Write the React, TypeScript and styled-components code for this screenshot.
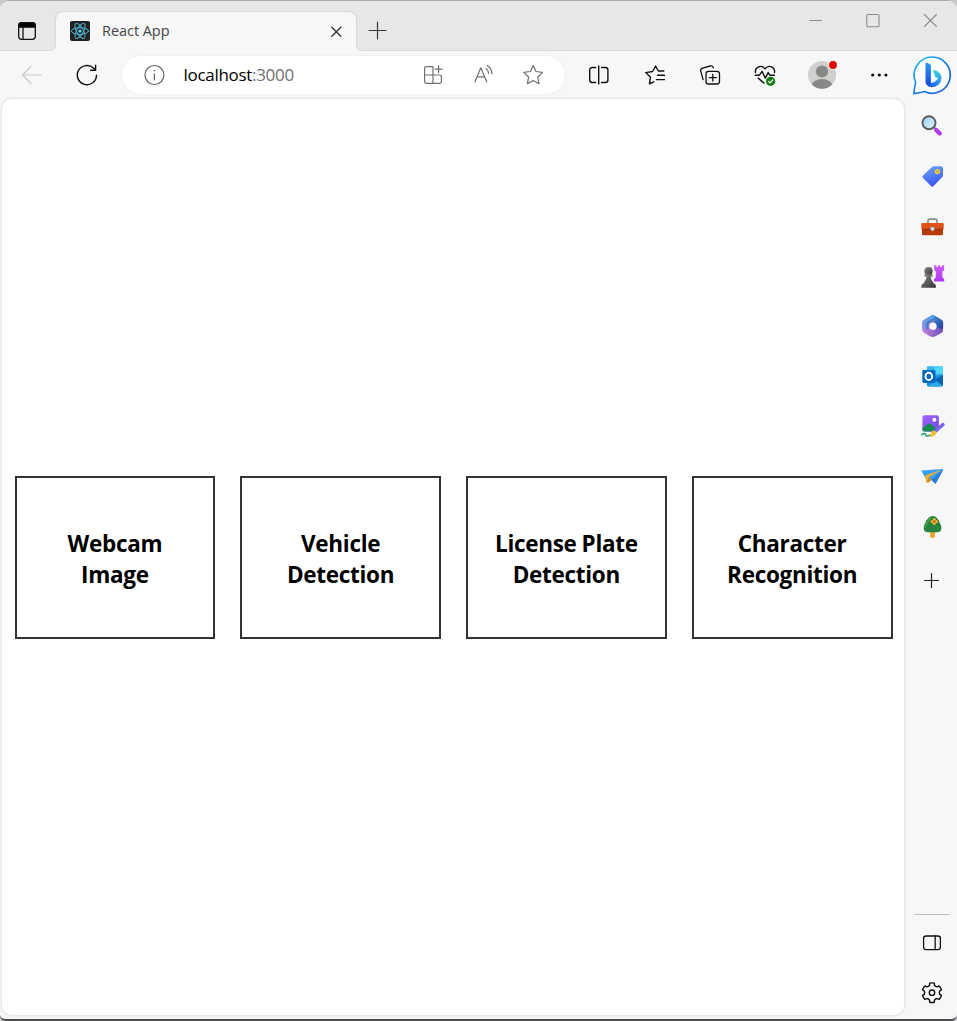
import React from 'react';
import styled, { createGlobalStyle } from 'styled-components';

const GlobalStyle = createGlobalStyle`
  * { box-sizing: border-box; }
  body { margin: 0; background: #c9c9cd; font-family: 'Open Sans', 'Noto Sans', sans-serif; }
`;

const Window = styled.div`
  width: 957px;
  height: 1021px;
  display: flex;
  flex-direction: column;
  overflow: hidden;
  background: #f7f7f7;
  border-top: 1px solid #a9a9a9;
  border-bottom: 2px solid #4b4b4b;
  border-radius: 9px 9px 6px 6px;
`;

const TitleBar = styled.header`
  height: 50px;
  flex: none;
  display: flex;
  align-items: flex-end;
  background: #e7e7e7;
  border-bottom: 1px solid #dadada;
`;

const TabActions = styled.div`
  width: 56px;
  height: 38px;
  display: flex;
  align-items: center;
  padding-left: 15px;
`;

const Tab = styled.div`
  position: relative;
  width: 300px;
  height: 39px;
  margin-bottom: -1px;
  padding: 0 12px 2px 14px;
  display: flex;
  align-items: center;
  background: #f7f7f7;
  border-radius: 7px 7px 0 0;
  box-shadow: 0 0 2px rgba(0, 0, 0, 0.22);
  clip-path: inset(-3px -6px 0 -6px);

  &::before,
  &::after {
    content: '';
    position: absolute;
    bottom: 0;
    width: 5px;
    height: 5px;
  }
  &::before {
    left: -5px;
    background: radial-gradient(circle at 0 0, #e7e7e7 3.6px, #d8d8d8 4.3px, #f7f7f7 5.1px);
  }
  &::after {
    right: -5px;
    background: radial-gradient(circle at 100% 0, #e7e7e7 3.6px, #d8d8d8 4.3px, #f7f7f7 5.1px);
  }
`;

const TabTitle = styled.span`
  flex: 1;
  margin-left: 12px;
  font-size: 14.5px;
  line-height: 20px;
  letter-spacing: -0.05px;
  color: #454545;
`;

const NewTab = styled.div`
  height: 39px;
  padding-left: 10px;
  display: flex;
  align-items: center;
`;

const WindowControls = styled.div`
  margin-left: auto;
  align-self: flex-start;
  height: 38px;
  padding-right: 15px;
  display: flex;
  align-items: center;
  gap: 33px;
`;

const Body = styled.div`
  flex: 1;
  min-height: 0;
  display: flex;
`;

const Main = styled.div`
  width: 905px;
  display: flex;
  flex-direction: column;
`;

const Toolbar = styled.div`
  height: 47px;
  flex: none;
  display: flex;
  align-items: center;
  padding-left: 12px;
`;

const ToolButton = styled.div<{ $gap?: number }>`
  width: 40px;
  height: 40px;
  margin-left: ${(p) => p.$gap ?? 15}px;
  display: flex;
  align-items: center;
  justify-content: center;
`;

const AddressBar = styled.div`
  width: 443px;
  height: 38px;
  margin-left: 15px;
  padding: 0 20px 0 20px;
  display: flex;
  align-items: center;
  background: #fff;
  border-radius: 19px;
  box-shadow: 0 0 3px rgba(0, 0, 0, 0.06);
`;

const Url = styled.span`
  flex: 1;
  margin-left: 17.5px;
  font-size: 17px;
  line-height: 24px;
  letter-spacing: -0.3px;
  color: #000;
`;

const Port = styled.span`
  color: #6f6f6f;
`;

const AddressActions = styled.div`
  display: flex;
  gap: 26px;
`;

const Page = styled.main`
  flex: 1;
  margin: 0 0 3px 1px;
  padding: 0 11.5px 0 12.5px;
  display: flex;
  align-items: center;
  background: #fff;
  border: 1px solid #e8e8e8;
  border-radius: 11px;
  box-shadow: 0 0 2px rgba(0, 0, 0, 0.1);
`;

const Stages = styled.div`
  flex: 1;
  display: grid;
  grid-template-columns: repeat(4, 1fr);
  gap: 25px;
`;

const Stage = styled.section`
  height: 163px;
  padding: 0 20px;
  display: flex;
  align-items: center;
  justify-content: center;
  border: 2px solid #333;
`;

const StageTitle = styled.h2`
  margin: 4px 0 0;
  font-size: 22.5px;
  line-height: 31px;
  font-weight: 700;
  letter-spacing: -0.3px;
  word-spacing: -0.5px;
  text-align: center;
  color: #000;
`;

const Sidebar = styled.aside`
  width: 52px;
  display: flex;
  flex-direction: column;
  align-items: center;
  padding: 4px 0 14px 2px;
`;

const Apps = styled.div`
  display: flex;
  flex-direction: column;
  gap: 26px;
  margin-top: 19px;
`;

const AddApp = styled.div`
  display: flex;
  margin-top: 31px;
`;

const SidebarFooter = styled.div`
  width: 35px;
  margin-top: auto;
  padding-top: 16px;
  display: flex;
  flex-direction: column;
  align-items: center;
  gap: 26px;
  border-top: 1px solid #bdbdbd;
`;

const Drawing = styled.svg`
  display: block;
  flex: none;
  overflow: visible;
  fill: none;
  stroke-linecap: round;
  stroke-linejoin: round;
`;

type IconProps = { size?: number; color?: string; width?: number; children: React.ReactNode };

const Icon = ({ size = 24, color = 'none', width = 1.4, children }: IconProps) => (
  <Drawing width={size} height={size} viewBox={`0 0 ${size} ${size}`} stroke={color} strokeWidth={width}>
    {children}
  </Drawing>
);

const TabActionsIcon = () => (
  <Icon color="#111" width={1.3}>
    <rect x="3.7" y="3.7" width="16.6" height="16.6" rx="3" />
    <path d="M3.7 8.2V6.7a3 3 0 0 1 3-3h10.6a3 3 0 0 1 3 3v1.5z" fill="#000" />
    <path d="M8 8v12" />
  </Icon>
);

const ReactIcon = () => (
  <Icon size={20} color="#4fc3e0" width={0.9}>
    <rect width="20" height="20" rx="2" fill="#222" stroke="none" />
    <circle cx="10" cy="10" r="1.6" fill="#61dafb" stroke="none" />
    <ellipse cx="10" cy="10" rx="8.6" ry="3.3" />
    <ellipse cx="10" cy="10" rx="8.6" ry="3.3" transform="rotate(60 10 10)" />
    <ellipse cx="10" cy="10" rx="8.6" ry="3.3" transform="rotate(120 10 10)" />
  </Icon>
);

const CloseTabIcon = () => (
  <Icon size={14} color="#333" width={1.3}>
    <path d="M1.8 3.3l9 9m0-9l-9 9" />
  </Icon>
);

const BackIcon = () => (
  <Icon color="#c9c9c9" width={1.2}>
    <path d="M21.5 12H2.5M11 3.5L2.5 12l8.5 8.5" />
  </Icon>
);

const ReloadIcon = () => (
  <Icon color="#111" width={1.4}>
    <path d="M21.5 12.2A9.6 9.6 0 1 1 18.4 5l2.2 2.1M20.6 2.2v5h-5" />
  </Icon>
);

const InfoIcon = () => (
  <Icon color="#666" width={1.2}>
    <circle cx="12.4" cy="12" r="9.5" />
    <path d="M12.4 10.8v6" />
    <circle cx="12.4" cy="7.8" r="0.8" fill="#666" stroke="none" />
  </Icon>
);

const AddAppIcon = () => (
  <Icon color="#6f6f6f" width={1.2}>
    <path d="M12 3.6H5.4a1.8 1.8 0 0 0-1.8 1.8v13.2a1.8 1.8 0 0 0 1.8 1.8h13.2a1.8 1.8 0 0 0 1.8-1.8v-4.8a1.8 1.8 0 0 0-1.8-1.8H3.6M12 3.6v16.8M17.6 2.6v7M14.1 6.1h7" />
  </Icon>
);

const ReadAloudIcon = () => (
  <Icon color="#6f6f6f" width={1.2}>
    <path d="M3.9 19L9.8 4.8 15.8 19M6.1 13.8h7.6M15 5.6c1.6 1.1 2.5 2.7 2.6 4.7M16.1 2.4c3 1.7 4.7 4.6 4.9 8.3" />
  </Icon>
);

const StarIcon = () => (
  <Icon color="#6f6f6f" width={1.2}>
    <path d="M12.2 2.5l2.8 6 6.6.9-4.8 4.6 1.2 6.7-5.8-3.2-5.8 3.2L7.6 14 2.8 9.4l6.6-.9z" />
  </Icon>
);

const SplitIcon = () => (
  <Icon color="#111" width={1.4}>
    <path d="M8.7 4.5H5.2a2.5 2.5 0 0 0-2.5 2.5v10a2.5 2.5 0 0 0 2.5 2.5h3.5M14.7 4.5h3.7a2.5 2.5 0 0 1 2.5 2.5v10a2.5 2.5 0 0 1-2.5 2.5h-3.7M11.7 3v18" />
  </Icon>
);

const FavoritesIcon = () => (
  <Icon color="#111" width={1.4}>
    <path d="M20.8 8h-5.5l-2.7-5-3 5.5-6.9 1.1 4.8 4.7-1.1 6.6 4.4-2.1M14.5 12.3h7M13.3 16.6h8.2" />
  </Icon>
);

const CollectionsIcon = () => (
  <Icon color="#111" width={1.3}>
    <rect x="8" y="8.3" width="13.5" height="12.7" rx="2.5" />
    <path d="M14.8 11.3v6.8M11.4 14.7h6.8M5.1 16.7L2.8 8.3a2.6 2.6 0 0 1 1.8-3.2l7.6-2.1a2.6 2.6 0 0 1 3.1 1.8" />
  </Icon>
);

const HealthIcon = () => (
  <Icon color="#111" width={1.4}>
    <path d="M2.5 9.5C1.6 4.4 8.2 0.9 12 5.9c3.8-5 10.4-1.5 9.5 3.6M2.2 12.2h4.3l2.6-3.8 3.2 6.7 2.9-5.5 1.6 2.6h4.7M5.2 15.1l5.8 5" />
    <circle cx="17.6" cy="18.3" r="4.6" fill="#107c10" stroke="none" />
    <path d="M15.5 18.4l1.5 1.4 2.7-2.8" stroke="#fff" strokeWidth="1.1" />
  </Icon>
);

const AvatarIcon = () => (
  <Icon size={28}>
    <defs>
      <clipPath id="avatar"><circle cx="14" cy="14" r="13.7" /></clipPath>
    </defs>
    <circle cx="14" cy="14" r="14" fill="#d2d0ce" />
    <circle cx="14" cy="10.5" r="6.1" fill="#8a8886" />
    <ellipse cx="14" cy="25.8" rx="10.8" ry="7.8" fill="#8a8886" clipPath="url(#avatar)" />
    <circle cx="25" cy="4" r="4.8" fill="#f7f7f7" />
    <circle cx="25" cy="4" r="3.9" fill="#e50000" />
  </Icon>
);

const MoreIcon = () => (
  <Icon>
    <circle cx="5.7" cy="12" r="1.6" fill="#111" />
    <circle cx="12.3" cy="12" r="1.6" fill="#111" />
    <circle cx="18.9" cy="12" r="1.6" fill="#111" />
  </Icon>
);

const BingIcon = () => (
  <Icon size={40}>
    <defs>
      <linearGradient id="bubble" x1="0" y1="0" x2="1" y2="1">
        <stop offset="0" stopColor="#28c4f0" />
        <stop offset=".5" stopColor="#1f7fe8" />
        <stop offset="1" stopColor="#2057c9" />
      </linearGradient>
      <linearGradient id="stem" x1="0" y1="0" x2="0" y2="1">
        <stop offset="0" stopColor="#2b9cf2" />
        <stop offset="1" stopColor="#1748d8" />
      </linearGradient>
      <linearGradient id="bowl" x1="0" y1="0" x2=".6" y2="1">
        <stop offset="0" stopColor="#3be0d0" />
        <stop offset="1" stopColor="#2a9cf4" />
      </linearGradient>
      <linearGradient id="base" x1="0" y1="1" x2="1" y2="0">
        <stop offset="0" stopColor="#1a4be0" />
        <stop offset="1" stopColor="#35b4f5" />
      </linearGradient>
    </defs>
    <path
      d="M20.3 2A18.1 18.1 0 1 1 12.5 36.5C9 37.5 5.5 38 1.8 38.6 2.5 34.5 2.6 31.3 3.7 27.5A18.1 18.1 0 0 1 20.3 2z"
      fill="#fff" stroke="url(#bubble)" strokeWidth="1.7"
    />
    <path d="M21.2 15.8q-.4-1.1.9-.8c4.9 1.2 7.3 4.5 7.3 8.3l-2.6 3.2-.6-3.2-3-1.4z" fill="url(#bowl)" />
    <path d="M29.4 22.8c.3 5.2-4.6 9.4-9.6 9.4-3.6 0-6.1-2.4-6.1-5.6l4.8 1.2c3 .4 6-2 8-4.8z" fill="url(#base)" />
    <path d="M13.5 8.2q0-1 1-.7l3.2 1.4q1.2.6 1.2 1.8v16c0 2.6-1.2 3.6-2.6 3.6-1.7 0-2.8-1.7-2.8-4z" fill="url(#stem)" />
  </Icon>
);

const SearchIcon = () => (
  <Icon>
    <defs>
      <linearGradient id="lens" x1="0" y1="0" x2="1" y2="1">
        <stop offset="0" stopColor="#9ccff2" /><stop offset="1" stopColor="#e0f5ff" />
      </linearGradient>
    </defs>
    <path d="M13.3 12.8l3 3" stroke="#8b8b8b" strokeWidth="2.4" />
    <path d="M16.2 15.9l3.6 3.6" stroke="#b637ef" strokeWidth="4.2" />
    <circle cx="9" cy="8.7" r="6.5" fill="url(#lens)" stroke="#5e5e5e" strokeWidth="2" />
  </Icon>
);

const TagIcon = () => (
  <Icon>
    <defs>
      <linearGradient id="tag" x1=".3" y1="0" x2=".6" y2="1">
        <stop offset="0" stopColor="#68a2fa" /><stop offset="1" stopColor="#3a4ff0" />
      </linearGradient>
    </defs>
    <path d="M12.3 2.8q.6-.6 1.5-.6h7q2.2 0 2.2 2.2v7q0 1-.7 1.7l-8.7 9q-1.3 1.2-2.6 0l-8-8q-1.3-1.2 0-2.5z" fill="url(#tag)" />
    <circle cx="17.4" cy="7.6" r="2.6" fill="#f3ce36" />
    <circle cx="17.4" cy="7.6" r="1.1" fill="#b99d48" />
  </Icon>
);

const ToolsIcon = () => (
  <Icon>
    <path d="M8 9.5V6.9q0-1.8 1.8-1.8h5.4q1.8 0 1.8 1.8v2.6" stroke="#8d8d8d" strokeWidth="1.7" />
    <rect x="2" y="12" width="21" height="9.3" rx="1.5" fill="#b73b08" />
    <rect x="1.3" y="9" width="22.4" height="6.2" rx="1.3" fill="#df5317" />
    <path d="M2 15.2h21" stroke="#8c2c09" strokeWidth=".8" />
    <path d="M10.5 13h4v2.8q-2 2.4-4 0z" fill="#d9d9d9" stroke="#777" strokeWidth=".5" />
  </Icon>
);

const GamesIcon = () => (
  <Icon>
    <defs>
      <linearGradient id="rook" x1="0" y1="0" x2="0" y2="1">
        <stop offset="0" stopColor="#d05cf8" /><stop offset="1" stopColor="#ae35f4" />
      </linearGradient>
      <linearGradient id="pawn" x1="0" y1="0" x2="1" y2="1">
        <stop offset="0" stopColor="#888" /><stop offset="1" stopColor="#333" />
      </linearGradient>
    </defs>
    <path d="M14.2 1.3h2.3v1.8h1.6V1.3h2.2v1.8h1.6V1.3h2.2v5l-1.9 1.5.4 6 1.6 1.2v2.6H14V15l1.7-1.2.3-6-1.8-1.5z" fill="url(#rook)" />
    <circle cx="8.5" cy="7.2" r="4.1" fill="url(#pawn)" />
    <path d="M4.4 10.3h8.2v2.3h-1.8c.1 2.6.9 4.2 2.3 5.4v1.1q2.8.9 2.8 3v1.6H1.3v-1.6q0-2.1 2.8-3V18c1.4-1.2 2.2-2.8 2.3-5.4h-2z" fill="url(#pawn)" />
  </Icon>
);

const MicrosoftIcon = () => (
  <Icon>
    <defs>
      <linearGradient id="m365left" x1="0" y1="1" x2="1" y2="0">
        <stop offset="0" stopColor="#8f8ce6" /><stop offset="1" stopColor="#4aa8e2" />
      </linearGradient>
      <linearGradient id="m365right" x1="0" y1="0" x2="1" y2="1">
        <stop offset="0" stopColor="#3aa0e0" /><stop offset="1" stopColor="#2b3c9e" />
      </linearGradient>
      <linearGradient id="m365base" x1="0" y1="0" x2="1" y2="0">
        <stop offset="0" stopColor="#bd83dd" /><stop offset="1" stopColor="#6b50b6" />
      </linearGradient>
    </defs>
    <path d="M10 2.2q2.7-1.8 5.4 0l5.9 3.5q1.8 1.1 1.8 3v7.2q0 1.9-1.8 3L15.4 22.2q-2.7 1.6-5.5 0L4.1 18.7q-1.8-1-1.8-3V8.8q0-2 1.8-3.1z" fill="url(#m365base)" />
    <path d="M10 2.2q2.7-1.8 5.4 0l5.9 3.5q1.8 1.1 1.8 3v4.5q-1 2.2-3.6 1.3l-3-1.5-2-6.4-5-1.6z" fill="url(#m365right)" />
    <path d="M10 2.2L4.1 5.7q-1.8 1.1-1.8 3.1v5.4q1.6 1.6 4 .8l2-1.3V9.8L15 6.2l-1.6-5q-1.6-.2-3.4 1z" fill="url(#m365left)" />
    <path d="M8.2 9.8l4.9-3.4 2.5-1.4-2-.9-6.4 3.7q-1 .6-1 2v5.6l2-1.2z" fill="#3263bd" opacity=".6" />
    <circle cx="12.9" cy="12.2" r="3.7" fill="#f7f7f7" />
  </Icon>
);

const OutlookIcon = () => (
  <Icon>
    <rect x="6.8" y="2.2" width="15.9" height="16" rx="1.3" fill="#35b8f1" />
    <path d="M14.7 2.2h6.7q1.3 0 1.3 1.3v6.2h-8z" fill="#50d9ff" />
    <path d="M6.8 10.2l8.2 1.6 8-1.3v10.4q0 1.7-1.7 1.7H8.5q-1.7 0-1.7-1.7z" fill="#1490df" />
    <path d="M14.7 16l8.3-5v10.5z" fill="#0a64ad" />
    <path d="M8 22.5l6.8-6.2 7.7 5.7q-.5.6-1.4.6z" fill="#28a8ea" />
    <rect x="2.3" y="6" width="13.2" height="13" rx="1.4" fill="#0868bd" />
    <ellipse cx="8.8" cy="12.4" rx="3.3" ry="3.6" stroke="#fff" strokeWidth="1.9" />
  </Icon>
);

const DesignerIcon = () => (
  <Icon>
    <defs>
      <linearGradient id="photo" x1="0" y1="0" x2="1" y2="1">
        <stop offset="0" stopColor="#a365f7" /><stop offset="1" stopColor="#7447ea" />
      </linearGradient>
      <clipPath id="frame"><rect x="2.4" y="1.3" width="16.5" height="16.2" rx="2.3" /></clipPath>
    </defs>
    <rect x="2.4" y="1.3" width="16.5" height="16.2" rx="2.3" fill="url(#photo)" />
    <path d="M1 15.4l6.2-5q2.1-1.6 4.2 0l5 4.4-3 3.7H1z" fill="#168b51" clipPath="url(#frame)" />
    <circle cx="14.4" cy="5.8" r="2" fill="#fff" />
    <path d="M1.6 20.6c2.5-1.5 4.2-1.4 4.1.2s2 1.7 4.3.3" stroke="#1a9b69" strokeWidth="1.5" />
    <path d="M15.4 17.1L23 10.5" stroke="#7764f0" strokeWidth="3.4" />
    <path d="M11.4 18q1.3-1.9 3.2-1.3 2.3 1 1.3 3.4-1.6 3.4-6.4 2.6 1.4-1.6 1.9-4.7z" fill="#f4bd36" />
  </Icon>
);

const DropIcon = () => (
  <Icon>
    <path d="M1.6 7.3q-.6-.5.3-.8L22.4 5q1 0 .6.9L16 19.1q-.5.8-1.2.1l-3.3-3.1-3.8 1.8z" fill="#3a9ff0" />
    <path d="M11.5 16.1L22.7 5.2q.7 0 .3.7L16 19.1q-.5.8-1.2.1z" fill="#287de0" />
    <path d="M5.3 11.6L22.8 5.2 9 13.1l-1.9 5.5q-.5.5-.7-.2z" fill="#f5af24" />
    <path d="M9 13.1l2.5 3-3.5 2.8q-.8.5-.9-.3z" fill="#d98a12" />
  </Icon>
);

const TreeIcon = () => (
  <Icon>
    <path d="M10.2 16.5h4.6v6.3q0 1-1 1h-2.6q-1 0-1-1z" fill="#eea326" />
    <path d="M12.4 2q3.4 0 5.2 3 1.4 1.2 1.9 3.5 1.9 2.5 1.9 5.3 0 4.5-4.5 4.5H8.2q-4.5 0-4.5-4.5 0-2.8 1.9-5.2.6-2.8 2.2-3.8 1.6-2.8 4.6-2.8z" fill="#27833e" />
    <path d="M11 3.5q-2.4 1.5-3.4 4.9-2.2 2-2.5 5.2" stroke="#4ca653" strokeWidth="1.3" />
    <g fill="#f8ba29">
      <circle cx="14.3" cy="5.4" r="1.5" /><circle cx="12.2" cy="7.5" r="1.5" />
      <circle cx="16.4" cy="7.5" r="1.5" /><circle cx="14.3" cy="9.6" r="1.5" />
    </g>
    <circle cx="14.3" cy="7.5" r="1.2" fill="#d8571d" />
  </Icon>
);

const PanelIcon = () => (
  <Icon color="#111" width={1.3}>
    <rect x="3.6" y="5" width="16.8" height="13.6" rx="2.5" />
    <path d="M15.2 5v13.6" />
  </Icon>
);

const gearPath = (() => {
  const points: string[] = [];
  for (let i = 0; i < 6; i++) {
    const base = (i * 60 - 90) * (Math.PI / 180);
    const at = (r: number, deg: number) => {
      const a = base + (deg * Math.PI) / 180;
      return `${(12 + r * Math.cos(a)).toFixed(2)} ${(11.7 + r * Math.sin(a)).toFixed(2)}`;
    };
    points.push(`${i ? 'L' : 'M'}${at(9.8, -14)}Q${at(10.2, 0)} ${at(9.8, 14)}L${at(7.8, 18)}Q${at(7, 30)} ${at(7.8, 42)}`);
  }
  return `${points.join('')}Z`;
})();

const SettingsIcon = () => (
  <Icon color="#111" width={1.4}>
    <path d={gearPath} />
    <circle cx="12" cy="11.7" r="2.7" />
  </Icon>
);

const stages = ['Webcam Image', 'Vehicle Detection', 'License Plate Detection', 'Character Recognition'];

export default function App() {
  return (
    <>
      <GlobalStyle />
      <Window>
        <TitleBar>
          <TabActions><TabActionsIcon /></TabActions>
          <Tab>
            <ReactIcon />
            <TabTitle>React App</TabTitle>
            <CloseTabIcon />
          </Tab>
          <NewTab>
            <Icon color="#333" width={1.2}><path d="M11.5 3v17M3 11.5h17" /></Icon>
          </NewTab>
          <WindowControls>
            <Icon color="#8c8c8c" width={1}><path d="M5.5 12.5h12" /></Icon>
            <Icon color="#8c8c8c" width={1.1}><rect x="5.8" y="6.5" width="12.2" height="12.2" rx="1" /></Icon>
            <Icon color="#8c8c8c" width={1.1}><path d="M6.4 6.5l12 12m0-12l-12 12" /></Icon>
          </WindowControls>
        </TitleBar>
        <Body>
          <Main>
            <Toolbar>
              <ToolButton $gap={0}><BackIcon /></ToolButton>
              <ToolButton><ReloadIcon /></ToolButton>
              <AddressBar>
                <InfoIcon />
                <Url>localhost<Port>:3000</Port></Url>
                <AddressActions>
                  <AddAppIcon />
                  <ReadAloudIcon />
                  <StarIcon />
                </AddressActions>
              </AddressBar>
              <ToolButton $gap={14}><SplitIcon /></ToolButton>
              <ToolButton $gap={16}><FavoritesIcon /></ToolButton>
              <ToolButton><CollectionsIcon /></ToolButton>
              <ToolButton><HealthIcon /></ToolButton>
              <ToolButton $gap={17}><AvatarIcon /></ToolButton>
              <ToolButton $gap={17}><MoreIcon /></ToolButton>
            </Toolbar>
            <Page>
              <Stages>
                {stages.map((title) => (
                  <Stage key={title}><StageTitle>{title}</StageTitle></Stage>
                ))}
              </Stages>
            </Page>
          </Main>
          <Sidebar>
            <BingIcon />
            <Apps>
              <SearchIcon />
              <TagIcon />
              <ToolsIcon />
              <GamesIcon />
              <MicrosoftIcon />
              <OutlookIcon />
              <DesignerIcon />
              <DropIcon />
              <TreeIcon />
            </Apps>
            <AddApp>
              <Icon color="#222" width={1.2}><path d="M11.5 4.5v14M4.5 11.5h14" /></Icon>
            </AddApp>
            <SidebarFooter>
              <PanelIcon />
              <SettingsIcon />
            </SidebarFooter>
          </Sidebar>
        </Body>
      </Window>
    </>
  );
}
